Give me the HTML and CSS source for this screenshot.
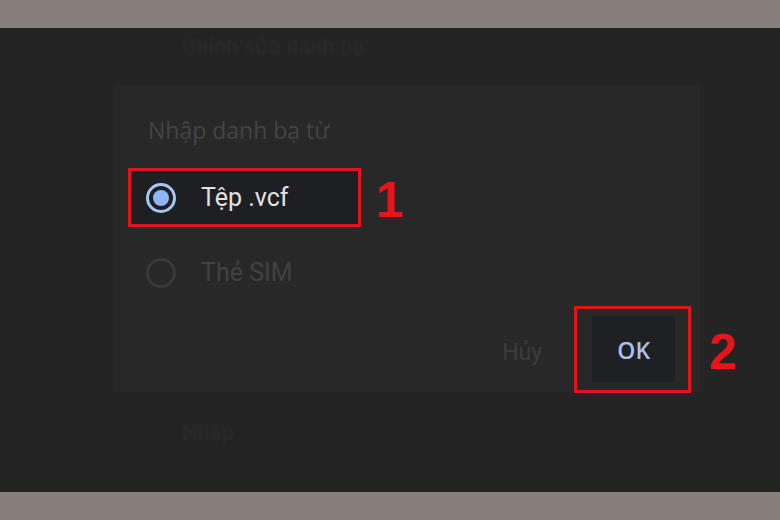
FILE: index.html
```html
<!DOCTYPE html>
<html lang="vi">
<head>
    <meta charset="UTF-8">
    <meta name="viewport" content="width=device-width, initial-scale=1.0">
    <title>Nhập danh bạ</title>
    <link rel="stylesheet" href="styles.css">
</head>
<body>
    <div class="band"></div>
    <div class="screen">
        <div class="menu-item">Chỉnh sửa danh bạ</div>
        <div class="menu-item">Nhập</div>

        <div class="dialog">
            <h2 class="dialog-title">Nhập danh bạ từ</h2>

            <div class="choice-row">
                <div class="option selected marked">
                    <svg class="radio" width="30" height="30" viewBox="0 0 30 30">
                        <circle cx="15" cy="15" r="13.5" fill="none" stroke="#a9c5f2" stroke-width="3"/>
                        <circle cx="15" cy="15" r="8" fill="#90b5f6"/>
                    </svg>
                    <span class="option-label">Tệp .vcf</span>
                </div>
                <span class="step step-one">1</span>
            </div>

            <div class="choice-row">
                <div class="option">
                    <svg class="radio" width="30" height="30" viewBox="0 0 30 30">
                        <circle cx="15" cy="15" r="13.5" fill="none" stroke="#3b3b3b" stroke-width="2.5"/>
                    </svg>
                    <span class="option-label dim">Thẻ SIM</span>
                </div>
            </div>

            <div class="actions">
                <button class="btn btn-cancel">Hủy</button>
                <div class="marked ok-wrap">
                    <button class="btn btn-ok">OK</button>
                </div>
                <span class="step step-two">2</span>
            </div>
        </div>
    </div>
    <div class="band"></div>
</body>
</html>
```

FILE: styles.css
```css
/* Reset */
* {
    margin: 0;
    padding: 0;
    box-sizing: border-box;
}

body {
    width: 780px;
    height: 520px;
    overflow: hidden;
    font-family: Roboto, "Noto Sans", sans-serif;
    background-color: #242424;
}

/* Gray bands at top and bottom */
.band {
    height: 28px;
    background-color: #877d7b;
}

/* Phone screen behind the dialog */
.screen {
    position: relative;
    height: 464px;
    background-color: #242424;
    display: flex;
    flex-direction: column;
    justify-content: space-between;
    padding: 6px 0 46px 182px;
}

.menu-item {
    font-size: 22px;
    line-height: 26px;
    color: #2b2b2b;
    filter: blur(0.8px);
}

/* Dialog */
.dialog {
    position: absolute;
    left: 113px;
    top: 57px;
    width: 587px;
    height: 307px;
    background-color: #282828;
    border-radius: 3px;
    padding: 30px 0 0 15px;
}

.dialog-title {
    font-family: "Open Sans", sans-serif;
    font-weight: 400;
    font-size: 23px;
    line-height: 30px;
    color: #444444;
    padding-left: 20px;
    margin-bottom: 23px;
}

.choice-row {
    display: flex;
    align-items: center;
}

.choice-row + .choice-row {
    margin-top: 16px;
}

.option {
    width: 233px;
    height: 59px;
    display: flex;
    align-items: center;
    gap: 25px;
    padding-left: 15px;
    border: 3px solid transparent;
}

.option.selected {
    background-color: #1e1f22;
}

.marked {
    border: 3px solid #e1141b;
}

.radio {
    flex-shrink: 0;
}

.option-label {
    font-size: 25px;
    color: #e2e2e2;
    white-space: nowrap;
}

.option-label.dim {
    color: #414141;
}

/* Red step numbers */
.step {
    font-family: "Liberation Sans", Arial, sans-serif;
    font-weight: bold;
    font-size: 50px;
    line-height: 50px;
    color: #e8141b;
}

.step-one {
    margin-left: 15px;
    margin-top: 4px;
}

.step-two {
    margin-left: 18px;
    margin-top: 4px;
}

/* Buttons */
.actions {
    display: flex;
    align-items: center;
    justify-content: flex-end;
    margin-top: 4px;
    margin-right: -37px;
    height: 87px;
}

.btn {
    border: none;
    background: none;
    cursor: pointer;
}

.btn-cancel {
    font-family: Roboto, sans-serif;
    font-size: 23px;
    color: #3c3c3c;
    margin-right: 32px;
    margin-top: 5px;
}

.ok-wrap {
    width: 117px;
    height: 87px;
    padding: 7px 13px 8px 15px;
}

.btn-ok {
    width: 83px;
    height: 66px;
    background-color: #1f2024;
    font-family: "Open Sans", sans-serif;
    font-weight: 600;
    font-size: 23px;
    color: #a8c2ea;
    padding-top: 2px;
}
```
